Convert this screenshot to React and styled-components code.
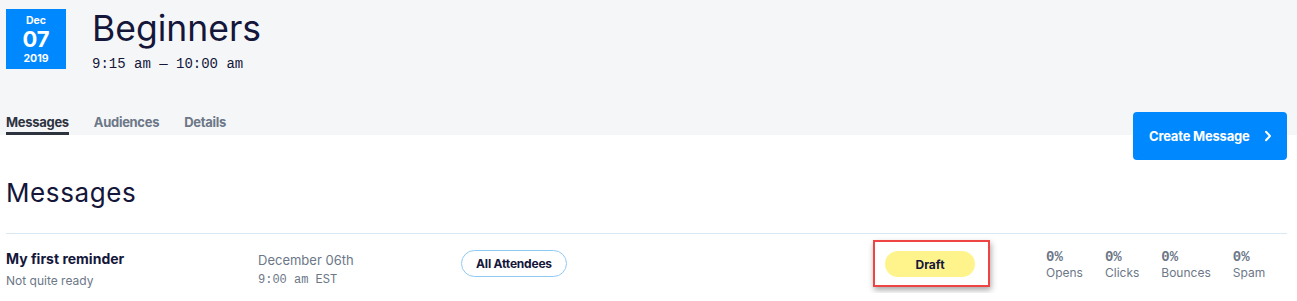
import React from "react";
import styled, { createGlobalStyle } from "styled-components";

const GlobalStyle = createGlobalStyle`
  html, body {
    margin: 0;
    padding: 0;
    background: #ffffff;
  }
  body {
    font-family: "Inter", "Liberation Sans", sans-serif;
    color: #14163a;
  }
`;

const messages = [
  {
    id: 1,
    title: "My first reminder",
    note: "Not quite ready",
    date: "December 06th",
    time: "9:00 am EST",
    audience: "All Attendees",
    status: "Draft",
    stats: [
      { label: "Opens", value: "0%" },
      { label: "Clicks", value: "0%" },
      { label: "Bounces", value: "0%" },
      { label: "Spam", value: "0%" },
    ],
  },
];

const tabs = ["Messages", "Audiences", "Details"];

const App = () => {
  return (
    <Page>
      <GlobalStyle />
      <Header>
        <EventInfo>
          <DateBadge>
            <span className="month">Dec</span>
            <span className="day">07</span>
            <span className="year">2019</span>
          </DateBadge>
          <TitleBlock>
            <Title>Beginners</Title>
            <TimeRange>9:15 am — 10:00 am</TimeRange>
          </TitleBlock>
        </EventInfo>
        <TabRow>
          <Tabs>
            {tabs.map((t, i) => (
              <Tab key={t} $active={i === 0}>
                {t}
              </Tab>
            ))}
          </Tabs>
          <CreateButton>
            Create Message
            <svg width="8" height="12" viewBox="0 0 8 12">
              <path
                d="M2 1.8 L6 6 L2 10.2"
                fill="none"
                stroke="#fff"
                strokeWidth="2"
                strokeLinecap="round"
                strokeLinejoin="round"
              />
            </svg>
          </CreateButton>
        </TabRow>
      </Header>

      <Content>
        <Heading>Messages</Heading>
        <List>
          {messages.map((m) => (
            <Row key={m.id}>
              <NameCell>
                <strong>{m.title}</strong>
                <span>{m.note}</span>
              </NameCell>
              <WhenCell>
                <span>{m.date}</span>
                <code>{m.time}</code>
              </WhenCell>
              <AudienceCell>
                <AudiencePill>{m.audience}</AudiencePill>
              </AudienceCell>
              <StatusCell>
                <Highlight>
                  <StatusPill>{m.status}</StatusPill>
                </Highlight>
              </StatusCell>
              <Stats>
                {m.stats.map((s) => (
                  <Stat key={s.label}>
                    <b>{s.value}</b>
                    <span>{s.label}</span>
                  </Stat>
                ))}
              </Stats>
            </Row>
          ))}
        </List>
      </Content>
    </Page>
  );
};

const Page = styled.div`
  width: 100%;
`;

const Header = styled.header`
  background: #f5f6f8;
  padding: 9px 10px 0 6px;
  height: 135px;
  box-sizing: border-box;
`;

const EventInfo = styled.div`
  display: flex;
  align-items: flex-start;
  gap: 26px;
`;

const DateBadge = styled.div`
  flex-shrink: 0;
  width: 60px;
  height: 60px;
  background: #0088ff;
  color: #fff;
  display: flex;
  flex-direction: column;
  align-items: center;
  justify-content: center;
  font-weight: 700;

  .month {
    font-size: 10.5px;
    line-height: 13px;
  }
  .day {
    font-size: 22px;
    line-height: 27px;
    margin: -1px 0;
  }
  .year {
    font-size: 10.5px;
    line-height: 13px;
  }
`;

const TitleBlock = styled.div`
  display: flex;
  flex-direction: column;
`;

const Title = styled.h1`
  margin: 0;
  font-size: 35.5px;
  font-weight: 400;
  line-height: 40px;
  color: #14163a;
`;

const TimeRange = styled.div`
  font-family: "Liberation Mono", "DejaVu Sans Mono", monospace;
  font-size: 14px;
  line-height: 18px;
  margin-top: 6px;
  color: #14163a;
`;

const TabRow = styled.div`
  display: flex;
  justify-content: space-between;
  align-items: flex-start;
  margin-top: 32px;
  height: 30px;
`;

const Tabs = styled.nav`
  display: flex;
  gap: 25px;
`;

const Tab = styled.a`
  font-size: 13px;
  font-weight: 700;
  letter-spacing: -0.3px;
  line-height: 20px;
  padding-top: 7px;
  height: 30px;
  box-sizing: border-box;
  color: ${(p) => (p.$active ? "#2e3340" : "#6c7787")};
  border-bottom: 3px solid ${(p) => (p.$active ? "#2e3340" : "transparent")};
  cursor: pointer;
`;

const CreateButton = styled.button`
  display: flex;
  align-items: center;
  gap: 14px;
  margin-top: 7px;
  height: 48px;
  width: 154px;
  flex-shrink: 0;
  padding: 0 0 0 16px;
  border: none;
  border-radius: 4px;
  background: #0088ff;
  color: #fff;
  font-family: inherit;
  font-size: 13px;
  font-weight: 700;
  letter-spacing: -0.2px;
  cursor: pointer;
`;

const Content = styled.main`
  padding: 0 10px 0 6px;
`;

const Heading = styled.h2`
  margin: 43px 0 0;
  font-size: 26px;
  font-weight: 400;
  letter-spacing: 0.6px;
  line-height: 30px;
  color: #14163a;
`;

const List = styled.div`
  margin-top: 25px;
  border-top: 1px solid #d9e8f6;
`;

const Row = styled.div`
  display: flex;
  align-items: center;
  height: 59px;
`;

const NameCell = styled.div`
  flex-shrink: 0;
  width: 252px;
  margin-top: 11px;
  display: flex;
  flex-direction: column;
  gap: 3px;

  strong {
    font-size: 14px;
    font-weight: 700;
    color: #14163a;
    line-height: 20px;
  }
  span {
    font-size: 12px;
    color: #6c7787;
    line-height: 18px;
  }
`;

const WhenCell = styled.div`
  flex-shrink: 0;
  width: 203px;
  margin-top: 12px;
  display: flex;
  flex-direction: column;
  gap: 3px;

  span {
    font-size: 13px;
    color: #6c7787;
    line-height: 18px;
  }
  code {
    font-family: "Liberation Mono", "DejaVu Sans Mono", monospace;
    font-size: 12px;
    color: #6c7787;
    line-height: 16px;
  }
`;

const AudienceCell = styled.div`
  flex-shrink: 0;
  width: 412px;
`;

const AudiencePill = styled.span`
  display: inline-flex;
  align-items: center;
  justify-content: center;
  height: 27px;
  width: 106px;
  box-sizing: border-box;
  border: 1px solid #8fc9f4;
  border-radius: 14px;
  font-size: 12px;
  font-weight: 700;
  letter-spacing: -0.2px;
  color: #14163a;
`;

const StatusCell = styled.div`
  flex-shrink: 0;
  width: 173px;
`;

const Highlight = styled.div`
  display: inline-flex;
  padding: 9px 13px 8px 10px;
  border: 2px solid #ef4444;
  box-shadow: 1px 3px 6px rgba(0, 0, 0, 0.35);
`;

const StatusPill = styled.span`
  display: inline-flex;
  align-items: center;
  justify-content: center;
  width: 90px;
  height: 26px;
  border-radius: 13px;
  background: #fff48c;
  font-size: 12px;
  font-weight: 700;
  color: #14163a;
`;

const Stats = styled.div`
  display: flex;
  gap: 22px;
  margin-top: 3px;
`;

const Stat = styled.div`
  display: flex;
  flex-direction: column;

  b {
    font-family: "Liberation Mono", "DejaVu Sans Mono", monospace;
    font-size: 14px;
    font-weight: 700;
    color: #6c7787;
    line-height: 16px;
  }
  span {
    font-size: 12px;
    color: #6c7787;
    line-height: 16px;
  }
`;

export default App;
